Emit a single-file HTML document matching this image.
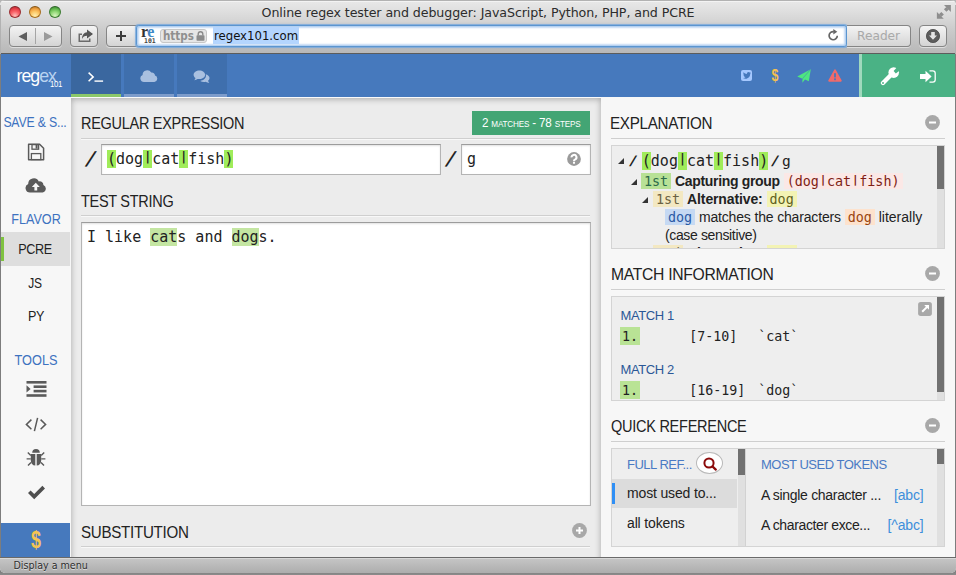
<!DOCTYPE html>
<html lang="en">
<head>
<meta charset="utf-8">
<title>Online regex tester and debugger: JavaScript, Python, PHP, and PCRE</title>
<style>
*{box-sizing:border-box;margin:0;padding:0}
html,body{width:956px;height:575px;overflow:hidden;background:#9a9a9a}
body{background:linear-gradient(#b4b4b4 0,#b4b4b4 50%,#747474 99%,#8c8c8c 100%)}
body{position:relative;font-family:"Liberation Sans",sans-serif;color:#222;font-size:14px}
.abs{position:absolute}
#win{position:absolute;left:0;top:0;width:956px;height:573px;overflow:hidden;border-radius:5px 5px 5px 5px;background:#eee}
/* chrome */
#chrome{position:absolute;left:0;top:0;width:956px;height:54px;background:linear-gradient(#b2b2b2 0,#b2b2b2 1px,#f3f3f3 1px,#f3f3f3 2px,#e7e7e7 2px,#dedede 12px,#c9c9c9 32px,#b8b8b8 53px,#5c5c5c 53px,#5c5c5c 54px)}
.tl{position:absolute;top:6px;width:12px;height:12px;border-radius:50%}
#title{position:absolute;left:0;width:956px;top:5px;text-align:center;font-family:"DejaVu Sans","Liberation Sans",sans-serif;font-size:12.65px;color:#2c2c2c;letter-spacing:-0.1px;white-space:nowrap}
.btn{position:absolute;top:25px;height:22px;border:1px solid #858585;border-radius:4px;background:linear-gradient(#f4f4f4,#d4d4d4);box-shadow:0 1px 0 rgba(255,255,255,.5)}
/* header */
#hdr{position:absolute;left:0;top:54px;width:956px;height:43px;background:#4679bd}
.tab{position:absolute;top:0;height:43px;width:50px;background:#3f6fad;border-bottom:3px solid #7d9ccb}
/* sidebar */
#side{position:absolute;left:1px;top:97px;width:70px;height:460px;background:#f7f7f7}
.sh{position:absolute;left:0;width:70px;text-align:center;color:#3d72c0;font-size:14px;white-space:nowrap}
.si{position:absolute;left:0;width:70px;text-align:center;color:#222;font-size:15px}
/* main */
#main{z-index:1;overflow:hidden;position:absolute;left:71px;top:97px;width:530px;height:460px;background:#ececec}
h2{position:absolute;font-weight:normal;font-size:15.7px;line-height:18px;color:#222;white-space:nowrap;letter-spacing:-0.3px;transform-origin:0 0}
.hr{position:absolute;height:1px;background:#cfcfcf;border-bottom:1px solid #f8f8f8;box-sizing:content-box}
.mono{font-family:"DejaVu Sans Mono","Liberation Mono",monospace}
.inp{position:absolute;background:#fff;border:1px solid #b4b4b4;border-top-color:#9c9c9c;box-shadow:inset 0 1px 2px rgba(0,0,0,.12)}
.p{display:inline-block;width:9.03px;height:18px;line-height:15px;font-size:11.5px;font-weight:bold;text-align:center;vertical-align:top;overflow:hidden}
.p2{display:inline-block;width:8.07px;font-size:11px;line-height:10px;font-weight:bold;text-align:center;position:relative;top:-3px}
.g{background:#a0ec5a}
.m{background:#c4e6a2}
/* right */
#right{position:absolute;left:600px;top:97px;width:355px;height:460px;background:#f7f7f7}
.box{position:absolute;background:#eeeeee;border:1px solid #d4d4d4;overflow:hidden}

.ex{position:absolute;white-space:nowrap;font-size:14px;line-height:18px;color:#222}
.ex b{letter-spacing:-0.27px}
.tk{font-family:"DejaVu Sans Mono","Liberation Mono",monospace;font-size:13.4px;padding:1px 3px 0;display:inline-block;line-height:15px;position:relative;top:0px;letter-spacing:0}
.arr{position:absolute;width:0;height:0;border-left:6px solid transparent;border-bottom:6px solid #333}
.mh{position:absolute;margin-top:.5px;color:#2b5797;font-size:13px;white-space:nowrap;letter-spacing:-0.42px}
.mr{position:absolute;font-size:13.3px;line-height:18px;white-space:pre;color:#222}
.sb{position:absolute;background:#e0e0e0}
.sb i{position:absolute;left:0;top:0;width:100%;background:#717171;display:block}
.qr{position:absolute;font-size:14px;white-space:nowrap;color:#222;letter-spacing:-0.15px}
/* status */
#status{z-index:6;position:absolute;left:0;top:557px;width:956px;height:16px;background:linear-gradient(#d8d8d8 0,#d8d8d8 1px,#c4c4c4 1px,#adadad 100%);border-top:1px solid #6a6a6a;text-shadow:0 1px 0 rgba(255,255,255,.55);font-family:"DejaVu Sans","Liberation Sans",sans-serif;font-stretch:condensed;font-size:10.6px;color:#2e2e2e;border-radius:0 0 4px 4px}
</style>
</head>
<body>
<div id="win">
<div id="chrome">
  <div class="tl" style="left:9px;background:radial-gradient(circle at 50% 88%,#ffc2bc 0,#f9646a 42%,#e8414a 68%,#a32a30 100%);border:1px solid #9a2e32;border-top-color:#7e1f24"></div>
  <div class="tl" style="left:29px;background:radial-gradient(circle at 50% 88%,#fff0b0 0,#fbc766 42%,#f0a140 68%,#a8681c 100%);border:1px solid #a8701f;border-top-color:#865412"></div>
  <div class="tl" style="left:49px;background:radial-gradient(circle at 50% 88%,#d8f5c0 0,#93d878 42%,#62b84e 68%,#2f7a2a 100%);border:1px solid #3d7d33;border-top-color:#2a6224"></div>
  <div id="title">Online regex tester and debugger: JavaScript, Python, PHP, and PCRE</div>
  <!-- nav buttons -->
  <div class="btn" style="left:9px;width:53px">
    <div class="abs" style="left:25px;top:2px;width:1px;height:16px;background:#a5a5a5"></div>
    <svg class="abs" style="left:8px;top:6px" width="10" height="9" viewBox="0 0 10 9"><path d="M9 0 L9 9 L0.5 4.5 Z" fill="#5e5e5e"/></svg>
    <svg class="abs" style="left:33px;top:6px" width="10" height="9" viewBox="0 0 10 9"><path d="M1 0 L1 9 L9.5 4.5 Z" fill="#9a9a9a"/></svg>
  </div>
  <div class="btn" style="left:70px;width:28px">
    <svg class="abs" style="left:6px;top:3px" width="17" height="14" viewBox="0 0 17 14"><path d="M1.5 4.5 H5 V6 H3 V11.5 H12 V9.5 H13.5 V13 H1.5 Z" fill="#6a6a6a"/><path d="M10 0.5 L16 5 L10 9.5 V6.7 C7.5 6.7 6 7.8 5 10 C5 6 7 3.6 10 3.3 Z" fill="#555"/></svg>
  </div>
  <div class="btn" style="left:106px;width:34px;border-radius:4px 0 0 4px">
    <div class="abs" style="left:9px;top:9px;width:10px;height:2px;background:#3c3c3c"></div>
    <div class="abs" style="left:13px;top:5px;width:2px;height:10px;background:#3c3c3c"></div>
  </div>
  <!-- url bar -->
  <div class="abs" id="url" style="left:136px;top:25px;width:711px;height:22px;background:#fff;border:1px solid #5b95cf;border-radius:3px;box-shadow:0 0 0 1px rgba(120,168,220,.75),0 0 2px 1px rgba(120,168,220,.4),inset 0 0 2px 1.5px rgba(110,165,228,.6)"><div class="abs" style="left:1px;top:1px;width:708px;height:18px">
    <div class="abs" style="left:3px;top:-3px;font-family:'Liberation Serif',serif;font-weight:bold;font-size:16px;line-height:16px;color:#333;letter-spacing:-0.6px">r<span style="color:#3f88c5">e</span></div>
    <div class="abs mono" style="left:6px;top:10.5px;font-size:6.5px;line-height:7px;color:#444;font-weight:bold">101</div>
    <div class="abs" style="left:22px;top:2px;width:47px;height:14px;background:#e6e6e6;border:1px solid #c6c6c6;border-radius:3px">
      <span class="abs" style="left:2px;top:-1px;font-family:'DejaVu Sans',sans-serif;font-weight:bold;font-stretch:condensed;font-size:11.5px;line-height:14px;color:#8f8f8f;letter-spacing:0px">https</span>
      <svg class="abs" style="left:35px;top:1px" width="9" height="10" viewBox="0 0 9 10"><path d="M2.2 4.5 V3 A2.3 2.3 0 0 1 6.8 3 V4.5" fill="none" stroke="#8b8b8b" stroke-width="1.4"/><rect x="0.5" y="4.3" width="8" height="5.5" rx="0.8" fill="#8b8b8b"/></svg>
    </div>
    <span class="abs" id="urltxt" style="left:75px;top:0;height:17px;background:#b4d5fe;font-family:'DejaVu Sans',sans-serif;font-stretch:condensed;font-size:13px;line-height:17px;color:#111;padding:0 1px">regex101.com</span>
    <svg class="abs" style="left:689px;top:2px" width="13" height="13" viewBox="0 0 13 13"><path d="M10.3 6.8 A4.1 4.1 0 1 1 6.8 2.6" fill="none" stroke="#666" stroke-width="1.7"/><path d="M6.3 0 L10.3 2.8 L6.3 5.6 Z" fill="#666"/></svg></div>
  </div>
  <div class="btn" style="left:847px;width:64px;border-radius:0 4px 4px 0;border-left:none"><span class="abs" style="left:10px;top:1px;font-family:'DejaVu Sans',sans-serif;font-size:12.2px;line-height:18px;color:#a9a9a9">Reader</span></div>
  <div class="btn" style="left:919px;width:28px">
    <svg class="abs" style="left:6px;top:3px" width="14" height="14" viewBox="0 0 14 14"><circle cx="7" cy="7" r="6.6" fill="#5c5c5c" stroke="#484848" stroke-width=".8"/><path d="M5.2 3 H8.8 V6.6 H11 L7 10.8 L3 6.6 H5.2 Z" fill="#e4e4e4"/></svg>
  </div>
  <svg class="abs" style="left:936px;top:4px" width="16" height="16" viewBox="0 0 16 16"><g fill="#8e8e8e" stroke="none"><path d="M8 1 H14.9 V7.9 Z"/><path d="M0.9 8.1 V14.8 H7.8 Z"/></g><path d="M11.6 4.2 L9.2 6.6 M4.2 11.6 L6.6 9.2" stroke="#8e8e8e" stroke-width="3.6" stroke-linecap="butt"/></svg>
</div>
<div id="hdr">
  <div class="abs" id="logo" style="left:16.5px;top:11.3px;font-size:17.8px;line-height:22px;color:#fff;letter-spacing:-1.0px;white-space:nowrap">reg<span style="color:#b9d3f1">ex</span></div>
  <div class="abs" id="logo101" style="left:50.3px;top:25px;font-size:9px;line-height:10px;color:#fff;letter-spacing:-0.3px;transform:scaleX(.86);transform-origin:0 0">101</div>
  <div class="tab" style="left:71px;background:#3a679f;border-bottom-color:#8bc86a">
    <svg class="abs" style="left:16px;top:17px" width="18" height="12" viewBox="0 0 18 12"><path d="M1.6 1.6 L6.2 5.9 L1.6 10.2" fill="none" stroke="#fff" stroke-width="1.5"/><rect x="7.5" y="9.4" width="8.6" height="1.4" fill="#fff"/></svg>
  </div>
  <div class="tab" style="left:124px">
    <svg class="abs" style="left:16px;top:15px" width="18" height="13" viewBox="0 0 18 13"><path d="M4 13 A3.7 3.7 0 0 1 2.6 5.9 A4.6 4.6 0 0 1 11.2 3.6 A3.1 3.1 0 0 1 15 6.6 A3.3 3.3 0 0 1 14.4 13 Z" fill="#a9c0e0"/></svg>
  </div>
  <div class="tab" style="left:177px">
    <svg class="abs" style="left:16px;top:16px" width="18" height="14" viewBox="0 0 18 14"><path d="M12.5 4.2 C14.8 4.8 16.5 6.3 16.5 8.1 C16.5 9.2 15.9 10.1 15 10.8 C15.2 11.6 15.7 12.3 16.3 12.8 C15 12.8 13.8 12.3 12.9 11.7 C12.3 11.8 11.7 11.9 11 11.9 C9.6 11.9 8.3 11.5 7.3 10.9 C10.6 10.6 13 8.3 13 5.6 C13 5.1 12.8 4.6 12.5 4.2 Z" fill="#a9c0e0"/><path d="M6.4 0.5 C9.6 0.5 12.1 2.4 12.1 4.8 C12.1 7.2 9.6 9.1 6.4 9.1 C5.8 9.1 5.2 9 4.6 8.9 C3.7 9.6 2.5 10.1 1.2 10.2 C1.8 9.6 2.3 8.9 2.5 8.1 C1.3 7.3 0.6 6.1 0.6 4.8 C0.6 2.4 3.2 0.5 6.4 0.5 Z" fill="#a9c0e0"/></svg>
  </div>
  <!-- right icons -->
  <div class="abs" style="left:741px;top:16px;width:11px;height:11px;border-radius:2px;background:#a5c8ff">
    <svg class="abs" style="left:1.5px;top:2px" width="8" height="7" viewBox="0 0 8 7"><path d="M8 0.9 C7.7 1 7.4 1.1 7.1 1.2 C7.4 1 7.7 0.6 7.8 0.2 C7.5 0.4 7.1 0.5 6.8 0.6 C6.5 0.2 6 0 5.5 0 C4.6 0 3.9 0.8 3.9 1.7 C3.9 1.8 3.9 2 3.9 2.1 C2.5 2 1.4 1.3 0.6 0.3 C0.4 0.6 0.3 0.9 0.3 1.2 C0.3 1.8 0.6 2.3 1.1 2.6 C0.8 2.6 0.5 2.5 0.3 2.4 C0.3 3.2 0.9 3.9 1.7 4.1 C1.4 4.1 1.2 4.2 0.9 4.1 C1.1 4.8 1.8 5.3 2.5 5.3 C1.8 5.9 0.9 6.1 0 6 C0.7 6.5 1.6 6.8 2.5 6.8 C5.5 6.8 7.2 4.2 7.2 2 V1.8 C7.5 1.5 7.8 1.2 8 0.9 Z" fill="#4679bd"/></svg>
  </div>
  <div class="abs" style="left:770px;top:11px;width:10px;text-align:center;font-size:16px;font-weight:bold;line-height:22px;color:#f5c04f;transform:scaleX(.78)">$</div>
  <svg class="abs" style="left:797px;top:14.5px" width="14" height="14" viewBox="0 0 14 14"><path d="M13.8 0.2 L11.8 12.2 L8 10.6 L5.4 13.8 V9.8 L0.2 7.4 Z" fill="#4de680"/><path d="M13 1 L5.6 9.6 L5.6 10.6" fill="none" stroke="#4679bd" stroke-width=".7" opacity=".7"/></svg>
  <svg class="abs" style="left:828px;top:14.5px" width="14" height="13" viewBox="0 0 14 13"><path d="M7 0.3 C7.4 0.3 7.7 0.5 7.9 0.9 L13.6 11.3 C14 12 13.5 12.7 12.8 12.7 H1.2 C0.5 12.7 0 12 0.4 11.3 L6.1 0.9 C6.3 0.5 6.6 0.3 7 0.3 Z" fill="#f06a6a"/><rect x="6.1" y="4.2" width="1.8" height="4.2" fill="#4679bd"/><rect x="6.1" y="9.4" width="1.8" height="1.8" fill="#4679bd"/></svg>
  <div class="abs" style="left:859px;top:0;width:97px;height:43px;background:#4ab285;border-left:3px solid #a0d9bd">
    <svg class="abs" style="left:18px;top:13px" width="20" height="19" viewBox="0 0 20 19"><path d="M3 16 L11.4 7.6" stroke="#fff" stroke-width="4.3" stroke-linecap="round" fill="none"/><circle cx="13.7" cy="5.6" r="5.3" fill="#fff"/><path d="M13.6 4 L17.6 -0.4 L20.6 2.8 L15.8 6.6 Z" fill="#4ab285"/><circle cx="3" cy="16" r="0.95" fill="#4ab285"/></svg>
    <svg class="abs" style="left:58px;top:16px" width="16" height="13" viewBox="0 0 16 13"><path d="M0 4 H5.5 V0.8 L11.6 6.5 L5.5 12.2 V9 H0 Z" fill="#fff"/><path d="M9.5 0.8 H12.8 A2.4 2.4 0 0 1 15.2 3.2 V9.8 A2.4 2.4 0 0 1 12.8 12.2 H9.5" fill="none" stroke="#fff" stroke-width="1.3"/></svg>
  </div>
</div>
<div id="side">
  <div class="sh" id="sh1" style="left:-2.5px;transform:scaleX(0.875);top:17px;letter-spacing:-0.2px">SAVE &amp; S...</div>
  <svg class="abs" style="left:26px;top:46px" width="18" height="18" viewBox="0 0 18 18"><path d="M1.6 1.3 H12.6 L16.6 5.3 V16.7 H1.6 Z" fill="none" stroke="#5a5a5a" stroke-width="1.5" stroke-linejoin="round"/><rect x="5" y="1.6" width="6.6" height="4.6" fill="none" stroke="#5a5a5a" stroke-width="1.3"/><rect x="8.6" y="2" width="2" height="3.6" fill="#5a5a5a"/><rect x="4.4" y="10.6" width="9.4" height="6" fill="none" stroke="#5a5a5a" stroke-width="1.3"/></svg>
  <svg class="abs" style="left:24px;top:80px" width="22" height="16" viewBox="0 0 22 16"><path d="M5 15.6 A4.5 4.5 0 0 1 3.2 7 A5.6 5.6 0 0 1 13.8 4.4 A3.7 3.7 0 0 1 18.4 8 A4 4 0 0 1 17.6 15.6 Z" fill="#5a5a5a"/><path d="M10.8 5.8 L14.8 10 H12.2 V13.4 H9.4 V10 H6.8 Z" fill="#f7f7f7"/></svg>
  <div class="sh" id="sh2" style="left:-0.4px;transform:scaleX(0.9);top:114px">FLAVOR</div>
  <div class="abs" style="left:0;top:135px;width:69px;height:34px;background:#dedede"></div>
  <div class="abs" style="left:0;top:140px;width:3px;height:24px;background:#7fc241"></div>
  <div class="si" id="si1" style="left:-0.7px;transform:scaleX(0.84);top:143px;letter-spacing:-0.4px">PCRE</div>
  <div class="si" id="si2" style="left:-1px;transform:scaleX(0.8);top:177px;letter-spacing:-0.4px">JS</div>
  <div class="si" id="si3" style="left:-0.3px;transform:scaleX(0.84);top:210px;letter-spacing:-0.4px">PY</div>
  <div class="sh" id="sh3" style="left:-0.5px;transform:scaleX(0.91);top:255px">TOOLS</div>
  <svg class="abs" style="left:25px;top:284px" width="21" height="16" viewBox="0 0 21 16"><rect x="0.5" y="0" width="20" height="2.6" fill="#5a5a5a"/><rect x="7.6" y="4.4" width="12.9" height="2.6" fill="#5a5a5a"/><rect x="7.6" y="8.8" width="12.9" height="2.6" fill="#5a5a5a"/><rect x="0.5" y="13.2" width="20" height="2.6" fill="#5a5a5a"/><path d="M0.5 4.2 L4.6 7.9 L0.5 11.6 Z" fill="#5a5a5a"/></svg>
  <svg class="abs" style="left:24px;top:320px" width="22" height="15" viewBox="0 0 22 15"><path d="M6.4 2.6 L1.4 7.4 L6.4 12.2 M15.6 2.6 L20.6 7.4 L15.6 12.2 M12.6 0.8 L9.4 14.2" fill="none" stroke="#5a5a5a" stroke-width="1.5"/></svg>
  <svg class="abs" style="left:25px;top:352px" width="20" height="18" viewBox="0 0 20 18"><path d="M6.2 3.8 A3.8 3.8 0 0 1 13.8 3.8 Z" fill="#5a5a5a"/><path d="M4.8 5 H9.3 V16.6 C6.6 16.4 4.8 14.2 4.8 11.4 Z M10.7 5 H15.2 V11.4 C15.2 14.2 13.4 16.4 10.7 16.6 Z" fill="#5a5a5a"/><path d="M4.8 6.4 L1.8 3.4 M15.2 6.4 L18.2 3.4 M4.8 9.9 H0.6 M15.2 9.9 H19.4 M5 13.4 L2 16.6 M15 13.4 L18 16.6" stroke="#5a5a5a" stroke-width="1.4" fill="none"/></svg>
  <svg class="abs" style="left:26px;top:388px" width="19" height="15" viewBox="0 0 19 15"><path d="M1 8 L3.6 5.4 L7.2 9 L15.4 0.8 L18 3.4 L7.2 14.2 Z" fill="#4f4f4f"/></svg>
  <div class="abs" style="left:0;top:426px;width:69px;height:34px;background:#4679bd"></div>
  <div class="abs" style="left:0;top:428px;width:70px;text-align:center;font-size:23px;font-weight:bold;line-height:30px;color:#f5c451;transform:scaleX(.78)">$</div>
</div>
<div id="main">
  <div class="abs" style="left:0;top:1px;width:530px;height:470px;box-shadow:inset 0 1px 6px rgba(0,0,0,.3)"></div><div class="abs" style="left:0;top:0;width:530px;height:1px;background:#fafafa"></div>
  <h2 id="h1" style="left:9.8px;top:18px;transform:scaleX(0.923)">REGULAR EXPRESSION</h2>
  <div class="abs" id="badge" style="left:401px;top:14px;width:118px;height:24px;background:#43a574;color:#fff;text-align:center;line-height:24px;font-size:12.6px;white-space:nowrap;letter-spacing:-0.2px"><span id="bt" style="display:inline-block;transform:scaleX(.925)">2 <span style="font-size:8.8px">MATCHES</span> - 78 <span style="font-size:8.8px">STEPS</span></span></div>
  <div class="hr" style="left:10px;top:41px;width:509px"></div>
  <div class="abs" id="sl1" style="left:17px;top:47px;font-size:20px;-webkit-text-stroke:0.45px #111;line-height:30px;color:#111;transform:skewX(-21deg);transform-origin:50% 50%">/</div>
  <div class="inp" style="left:30px;top:47px;width:340px;height:31px"><span class="abs mono" id="re" style="left:5px;top:5px;font-size:15px;line-height:18px;white-space:pre;color:#222"><span class="g">(</span>dog<span class="g p">|</span>cat<span class="g p">|</span>fish<span class="g">)</span></span></div>
  <div class="abs" id="sl2" style="left:377px;top:47px;font-size:20px;-webkit-text-stroke:0.45px #111;line-height:30px;color:#111;transform:skewX(-21deg);transform-origin:50% 50%">/</div>
  <div class="inp" style="left:390px;top:47px;width:130px;height:31px"><span class="abs mono" style="left:5px;top:5px;font-size:15px;line-height:18px;color:#222">g</span>
    <svg class="abs" style="left:105.2px;top:7.2px" width="14" height="14" viewBox="0 0 13 13"><circle cx="6.5" cy="6.5" r="6.4" fill="#9a9a9a"/><path d="M4.2 5 A2.3 2.3 0 1 1 7.7 6.9 C6.8 7.4 6.5 7.6 6.5 8.3" fill="none" stroke="#fff" stroke-width="1.9"/><rect x="5.55" y="9" width="1.9" height="1.9" fill="#fff"/></svg>
  </div>
  <h2 id="h2" style="left:9.8px;top:95.5px;transform:scaleX(0.9225)">TEST STRING</h2>
  <div class="hr" style="left:10px;top:118px;width:509px"></div>
  <div class="inp" style="left:10px;top:125px;width:510px;height:284px"><span class="abs mono" id="ts" style="left:5px;top:5px;font-size:15px;line-height:18px;white-space:pre;color:#222">I like <span class="m">cat</span>s and <span class="m">dog</span>s.</span></div>
  <h2 id="h3" style="left:9.8px;top:426.5px;transform:scaleX(0.966)">SUBSTITUTION</h2>
  <svg class="abs" style="left:501px;top:425.5px" width="15" height="15" viewBox="0 0 15 15"><circle cx="7.5" cy="7.5" r="7.4" fill="#a8a8a8"/><rect x="4" y="6.5" width="7" height="2" fill="#fff"/><rect x="6.5" y="4" width="2" height="7" fill="#fff"/></svg>
  <div class="hr" style="left:10px;top:449px;width:509px"></div>
</div>
<div id="right">
  <h2 id="h4" style="left:9.8px;top:18.2px;transform:scaleX(0.97)">EXPLANATION</h2>
  <svg class="abs" style="left:325px;top:17.5px" width="15" height="15" viewBox="0 0 15 15"><circle cx="7.5" cy="7.5" r="7.4" fill="#a8a8a8"/><rect x="4" y="6.5" width="7" height="2" fill="#fff"/></svg>
  <div class="hr" style="left:11px;top:41px;width:334px"></div>
  <div class="box" id="bx1" style="left:11px;top:48px;width:334px;height:104px"><div class="abs" style="left:-1px;top:0;width:335px;height:100%">
    <div class="arr" style="left:7px;top:11.5px"></div>
    <div class="ex" id="e1a" style="left:19.5px;top:6px;font-size:14.5px;font-weight:bold;line-height:18px;transform:skewX(-22deg)">/</div>
    <div class="ex mono" id="e1" style="left:30.8px;top:6px;font-size:15px;line-height:18px"><span class="g">(</span>dog<span class="g p">|</span>cat<span class="g p">|</span>fish<span class="g">)</span></div>
    <div class="ex" id="e1b" style="left:162.2px;top:6px;font-size:14.5px;font-weight:bold;line-height:18px;transform:skewX(-22deg)">/</div>
    <div class="ex mono" id="e1c" style="left:171px;top:6px;font-size:14.5px;line-height:18px">g</div>
    <div class="arr" style="left:19.5px;top:32.5px"></div>
    <div class="ex" id="e2" style="left:30px;top:26px"><span class="tk" style="background:#b8e196;color:#2b6a4a">1st</span> <b style="letter-spacing:-0.33px">Capturing group</b> <span class="tk" style="background:#fbe8e6;color:#7f1d14">(dog<span class="p2">|</span>cat<span class="p2">|</span>fish)</span></div>
    <div class="arr" style="left:31px;top:50.5px"></div>
    <div class="ex" id="e3" style="left:42px;top:44px"><span class="tk" style="background:#f3e8c2;color:#6b6242">1st</span> <b style="letter-spacing:-0.12px">Alternative:</b> <span class="tk" style="background:#f3f3b4;color:#5f5f1e">dog</span></div>
    <div class="ex" id="e4" style="left:54px;top:62px"><span class="tk" style="background:#c5d9f3;color:#2a5aa5">dog</span><span style="letter-spacing:-0.16px"> matches the characters </span><span class="tk" style="background:#fde2cd;color:#9a4510">dog</span> literally</div>
    <div class="ex" id="e5" style="left:54px;top:80px;letter-spacing:-0.36px">(case sensitive)</div>
    <div class="ex" id="e6" style="left:42px;top:98px"><span class="tk" style="background:#f3e8c2;color:#6b6242">2nd</span> <b style="letter-spacing:-0.12px">Alternative:</b> <span class="tk" style="background:#f3f3b4;color:#5f5f1e">cat</span></div>
    <div class="sb" style="left:326px;top:0;width:7px;height:102px"><i style="height:43px"></i></div>
  </div></div>
  <h2 id="h5" style="left:11px;top:169px;transform:scaleX(1.0)">MATCH INFORMATION</h2>
  <svg class="abs" style="left:325px;top:168.5px" width="15" height="15" viewBox="0 0 15 15"><circle cx="7.5" cy="7.5" r="7.4" fill="#a8a8a8"/><rect x="4" y="6.5" width="7" height="2" fill="#fff"/></svg>
  <div class="hr" style="left:11px;top:192px;width:334px"></div>
  <div class="box" id="bx2" style="left:11px;top:199px;width:334px;height:105px"><div class="abs" style="left:-1px;top:0;width:335px;height:100%">
    <div class="mh" id="m1" style="left:9.6px;top:10px">MATCH 1</div>
    <div class="abs" style="left:9px;top:30px;width:20px;height:18px;background:#b9e395"></div>
    <div class="mr mono" id="r1" style="left:11px;top:31px">1.</div>
    <div class="mr mono" id="r1b" style="left:78.3px;top:31px">[7-10]</div>
    <div class="mr mono" id="r1c" style="left:147.3px;top:31px">`cat`</div>
    <div class="mh" id="m2" style="left:9.6px;top:64px">MATCH 2</div>
    <div class="abs" style="left:9px;top:84px;width:20px;height:18px;background:#b9e395"></div>
    <div class="mr mono" id="r2" style="left:11px;top:85px">1.</div>
    <div class="mr mono" id="r2b" style="left:78.3px;top:85px">[16-19]</div>
    <div class="mr mono" id="r2c" style="left:147.3px;top:85px">`dog`</div>
    <svg class="abs" style="left:307px;top:5px" width="14" height="14" viewBox="0 0 14 14"><rect x="0.1" y="0.1" width="13.8" height="13.8" rx="2.6" fill="#a8a8a8"/><path d="M6.2 3 H11 V7.8 L9.3 6.1 L4.9 10.5 L3.5 9.1 L7.9 4.7 Z" fill="#fff"/></svg>
    <div class="sb" style="left:326px;top:0;width:7px;height:103px"><i style="height:95px"></i></div>
  </div></div>
  <h2 id="h6" style="left:10.8px;top:321px;transform:scaleX(0.9265)">QUICK REFERENCE</h2>
  <svg class="abs" style="left:325px;top:320.5px" width="15" height="15" viewBox="0 0 15 15"><circle cx="7.5" cy="7.5" r="7.4" fill="#a8a8a8"/><rect x="4" y="6.5" width="7" height="2" fill="#fff"/></svg>
  <div class="hr" style="left:11px;top:344px;width:334px"></div>
  <div class="box" id="bx3" style="left:11px;top:351px;width:334px;height:99px"><div class="abs" style="left:-1px;top:0;width:335px;height:100%">
    <div class="abs" style="left:0;top:30px;width:126px;height:29px;background:#dcdcdc"></div>
    <div class="abs" style="left:1px;top:34px;width:3px;height:21px;background:#2f8ff5"></div>
    <div class="qr" id="q1" style="left:16px;top:7.5px;color:#4a7ac4;font-size:13px;letter-spacing:-0.5px">FULL REF...</div>
    <div class="abs" style="left:85px;top:3px;width:27px;height:22px;border:1px solid #b9b9b9;border-radius:13.5px/11px;background:#fff">
      <svg class="abs" style="left:5.5px;top:3.5px" width="14" height="14" viewBox="0 0 14 14"><circle cx="6" cy="6" r="4.6" fill="none" stroke="#8b0a0a" stroke-width="2"/><path d="M9.4 9.4 L12.8 12.6" stroke="#8b0a0a" stroke-width="2.2" stroke-linecap="round"/></svg>
    </div>
    <div class="qr" id="q2" style="left:16px;top:36px">most used to...</div>
    <div class="qr" id="q3" style="left:16px;top:66px">all tokens</div>
    <div class="sb" style="left:127px;top:0;width:7px;height:97px"><i style="height:26px"></i></div>
    <div class="abs" style="left:134px;top:0;width:1px;height:97px;background:#d2d2d2"></div>
    <div class="qr" id="q4" style="left:150px;top:7.5px;color:#4a7ac4;font-size:13px;letter-spacing:-0.5px">MOST USED TOKENS</div>
    <div class="qr" id="q5" style="left:150px;top:38px;letter-spacing:-0.31px">A single character ...</div>
    <div class="qr" id="q6" style="right:22.5px;top:38px;color:#3d8edb">[abc]</div>
    <div class="qr" id="q7" style="left:150px;top:68px;letter-spacing:-0.37px">A character exce...</div>
    <div class="qr" id="q8" style="right:22.5px;top:68px;color:#3d8edb">[^abc]</div>
    <div class="sb" style="left:326px;top:0;width:7px;height:97px"><i style="height:15px"></i></div>
  </div></div>
</div>
<div class="abs" style="left:0;top:5px;width:1px;height:49px;background:#b2b2b2;z-index:5"></div><div class="abs" style="left:955px;top:5px;width:1px;height:49px;background:#b2b2b2;z-index:5"></div><div class="abs" style="left:0;top:54px;width:1px;height:503px;background:#7d7d7d;z-index:5"></div><div class="abs" style="left:955px;top:54px;width:1px;height:503px;background:#7d7d7d;z-index:5"></div>
<div id="status"><span class="abs" id="st" style="left:13.5px;top:0.8px;white-space:nowrap">Display a menu</span></div>
</div>
</body>
</html>
